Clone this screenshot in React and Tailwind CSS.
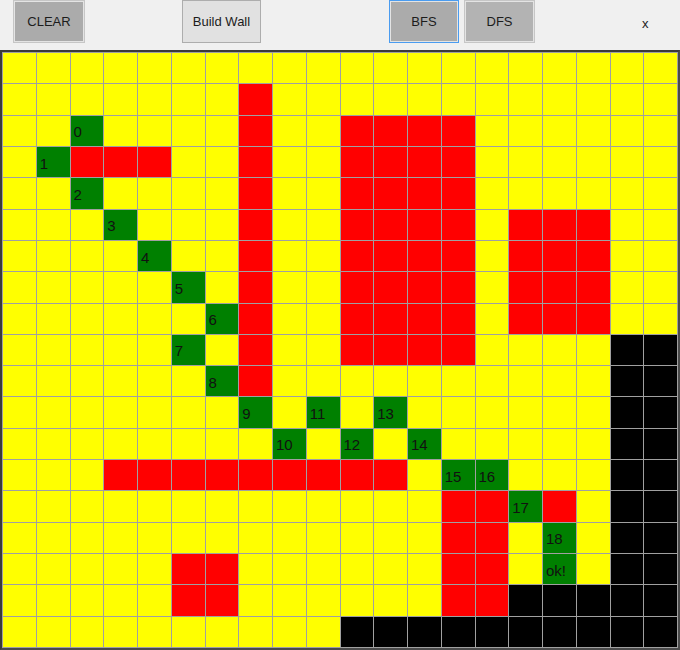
import React from 'react'

const rows = [
  '....................',
  '.......R............',
  '..G....R..RRRR......',
  '.GRRR..R..RRRR......',
  '..G....R..RRRR......',
  '...G...R..RRRR.RRR..',
  '....G..R..RRRR.RRR..',
  '.....G.R..RRRR.RRR..',
  '......GR..RRRR.RRR..',
  '.....G.R..RRRR....BB',
  '......GR..........BB',
  '.......G.G.G......BB',
  '........G.G.G.....BB',
  '...RRRRRRRRR.GG...BB',
  '.............RRGR.BB',
  '.............RR.G.BB',
  '.....RR......RR.G.BB',
  '.....RR......RRBBBBB',
  '..........BBBBBBBBBB',
]

const labels = {
  '2,2': '0', '3,1': '1', '4,2': '2', '5,3': '3', '6,4': '4', '7,5': '5',
  '8,6': '6', '9,5': '7', '10,6': '8', '11,7': '9', '12,8': '10', '11,9': '11',
  '12,10': '12', '11,11': '13', '12,12': '14', '13,13': '15', '13,14': '16',
  '14,15': '17', '15,16': '18', '16,16': 'ok!',
}

const cellBg = {
  '.': 'bg-[#ffff00]',
  R: 'bg-[#ff0000]',
  G: 'bg-[#008000]',
  B: 'bg-black',
}

function ToolButton({ children, className }) {
  return (
    <button className={`h-[43px] text-[13px] text-[#1c1c1c] flex items-center justify-center ${className}`}>
      {children}
    </button>
  )
}

export default function App() {
  return (
    <div className="w-[680px] h-[650px] bg-[#f0f0f0] overflow-hidden font-['Liberation_Sans',Arial,sans-serif]">
      <div className="h-[50px] flex items-start">
        <ToolButton className="ml-[13px] w-[72px] bg-[#ababab] border border-[#c6c6c6] shadow-[inset_0_0_0_1px_#e4e4e4]">
          CLEAR
        </ToolButton>
        <ToolButton className="ml-[97px] w-[79px] bg-[#e1e1e1] border border-[#adadad]">
          Build Wall
        </ToolButton>
        <ToolButton className="ml-[128px] w-[70px] bg-[#ababab] border border-[#4a9cf0] shadow-[inset_0_0_0_1px_#e4e4e4]">
          BFS
        </ToolButton>
        <ToolButton className="ml-[5px] w-[71px] bg-[#b3b3b3] border border-[#c6c6c6] shadow-[inset_0_0_0_1px_#e4e4e4]">
          DFS
        </ToolButton>
        <span className="ml-[107px] mt-[14px] text-[13px] text-[#1c1c1c]">x</span>
      </div>

      <div className="h-[600px] border-2 border-t-[#3a3a3a] border-l-[#3a3a3a] border-r-[#4a4a4a] border-b-[#4a4a4a] bg-[#a0a0a0] p-px">
        <div className="h-full grid grid-cols-[repeat(20,minmax(0,1fr))] grid-rows-[repeat(19,minmax(0,1fr))] gap-px">
          {rows.map((row, r) =>
            row.split('').map((ch, c) => (
              <div
                key={`${r}-${c}`}
                className={`${cellBg[ch]} flex items-center pl-[3px] pt-[2px] text-[15px] text-[#111] leading-none`}
              >
                {labels[`${r},${c}`]}
              </div>
            ))
          )}
        </div>
      </div>
    </div>
  )
}
